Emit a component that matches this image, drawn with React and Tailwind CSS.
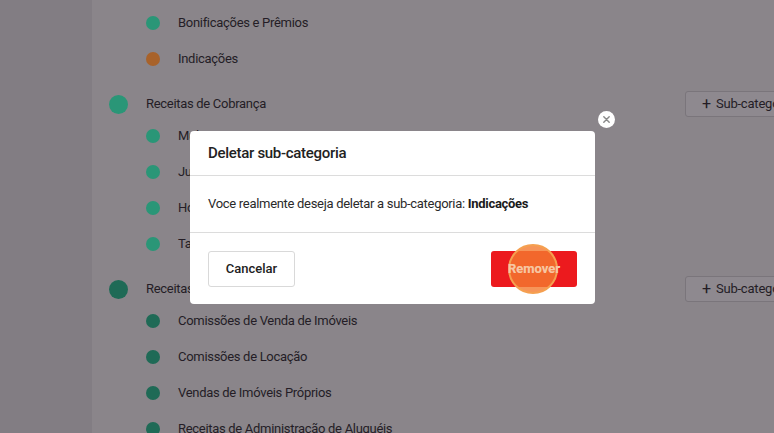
const groups = [
  {
    name: null,
    items: [
      { label: "Bonificações e Prêmios", color: "bg-[#2a9677]" },
      { label: "Indicações", color: "bg-[#a8622a]" },
    ],
  },
  {
    name: "Receitas de Cobrança",
    color: "bg-[#2a9677]",
    items: [
      { label: "Multas", color: "bg-[#2a9677]" },
      { label: "Juros", color: "bg-[#2a9677]" },
      { label: "Honorários", color: "bg-[#2a9677]" },
      { label: "Taxas", color: "bg-[#2a9677]" },
    ],
  },
  {
    name: "Receitas Imobiliárias",
    color: "bg-[#1f6a56]",
    items: [
      { label: "Comissões de Venda de Imóveis", color: "bg-[#1f6a56]" },
      { label: "Comissões de Locação", color: "bg-[#1f6a56]" },
      { label: "Vendas de Imóveis Próprios", color: "bg-[#1f6a56]" },
      { label: "Receitas de Administração de Aluguéis", color: "bg-[#1f6a56]" },
    ],
  },
];

function SubRow({ item }) {
  return (
    <div className="flex h-9 items-center pl-[54px]">
      <span className={`h-[14px] w-[14px] shrink-0 rounded-full ${item.color}`} />
      <span className="ml-[18px] whitespace-nowrap text-[13px] tracking-[-0.3px] text-[#241d26]">{item.label}</span>
    </div>
  );
}

function CategoryRow({ group }) {
  return (
    <div className="mt-[13px] flex h-[28px] items-center pl-[17px]">
      <span className={`h-[19px] w-[19px] shrink-0 rounded-full ${group.color}`} />
      <span className="ml-[18px] text-[13px] tracking-[-0.3px] text-[#241d26]">{group.name}</span>
      <button className="ml-auto mr-[-31px] flex h-[26px] w-[120px] shrink-0 items-center gap-[5px] whitespace-nowrap rounded-[3px] border border-[#7a757b] bg-[#8e898f] pl-[16px] text-[13px] tracking-[-0.2px] text-[#241d26]">
        <span className="text-[16px] leading-none">+</span> Sub-categoria
      </button>
    </div>
  );
}

export default function App() {
  return (
    <div
      className="relative flex h-[433px] w-[774px] overflow-hidden bg-[#8a858a]"
      style={{ fontFamily: "Roboto, 'Liberation Sans', sans-serif" }}
    >
      <div className="w-[92px] shrink-0 bg-[#827d83]" />
      <div className="min-w-0 flex-1 pt-[5px]">
        {groups.map((g, i) => (
          <div key={i}>
            {g.name && <CategoryRow group={g} />}
            {g.items.map((it) => (
              <SubRow key={it.label} item={it} />
            ))}
          </div>
        ))}
      </div>

      {/* modal */}
      <div className="absolute left-[190px] top-[131px] w-[405px] rounded-[4px] bg-white">
        <div className="flex h-[45px] items-center border-b border-[#dcdcdc] px-[18px]">
          <span className="text-[15px] font-medium tracking-[-0.3px] text-[#222]">Deletar sub-categoria</span>
        </div>
        <div className="flex h-[57px] items-center border-b border-[#dcdcdc] px-[18px] text-[13px] tracking-[-0.3px] text-[#2a2a2a]">
          Voce realmente deseja deletar a sub-categoria:&nbsp;
          <span className="font-bold text-[#1a1a1a]">Indicações</span>
        </div>
        <div className="flex h-[71px] items-center justify-between px-[18px] pt-[1px]">
          <button className="h-[36px] w-[87px] rounded-[3px] border border-[#d9d9d9] bg-white text-[13px] font-medium text-[#222]">
            Cancelar
          </button>
          <div className="relative">
            <button className="h-[36px] w-[86px] rounded-[3px] bg-[#ec1a1e] text-[13px] font-bold text-white">
              Remover
            </button>
            <span className="pointer-events-none absolute left-[17px] top-[-7px] h-[50px] w-[50px] rounded-full border-2 border-[#f5a050] bg-[#f47a30]/80" />
            <span className="pointer-events-none absolute inset-0 flex items-center justify-center text-[13px] font-bold text-[#f6c6a4]">
              Remover
            </span>
          </div>
        </div>
      </div>

      {/* close */}
      <div className="absolute left-[598px] top-[111px] flex h-[17px] w-[17px] items-center justify-center rounded-full bg-white">
        <svg width="9" height="9" viewBox="0 0 10 10" stroke="#8a8a8a" strokeWidth="1.6" strokeLinecap="round">
          <path d="M2 2l6 6M8 2l-6 6" />
        </svg>
      </div>
    </div>
  );
}
